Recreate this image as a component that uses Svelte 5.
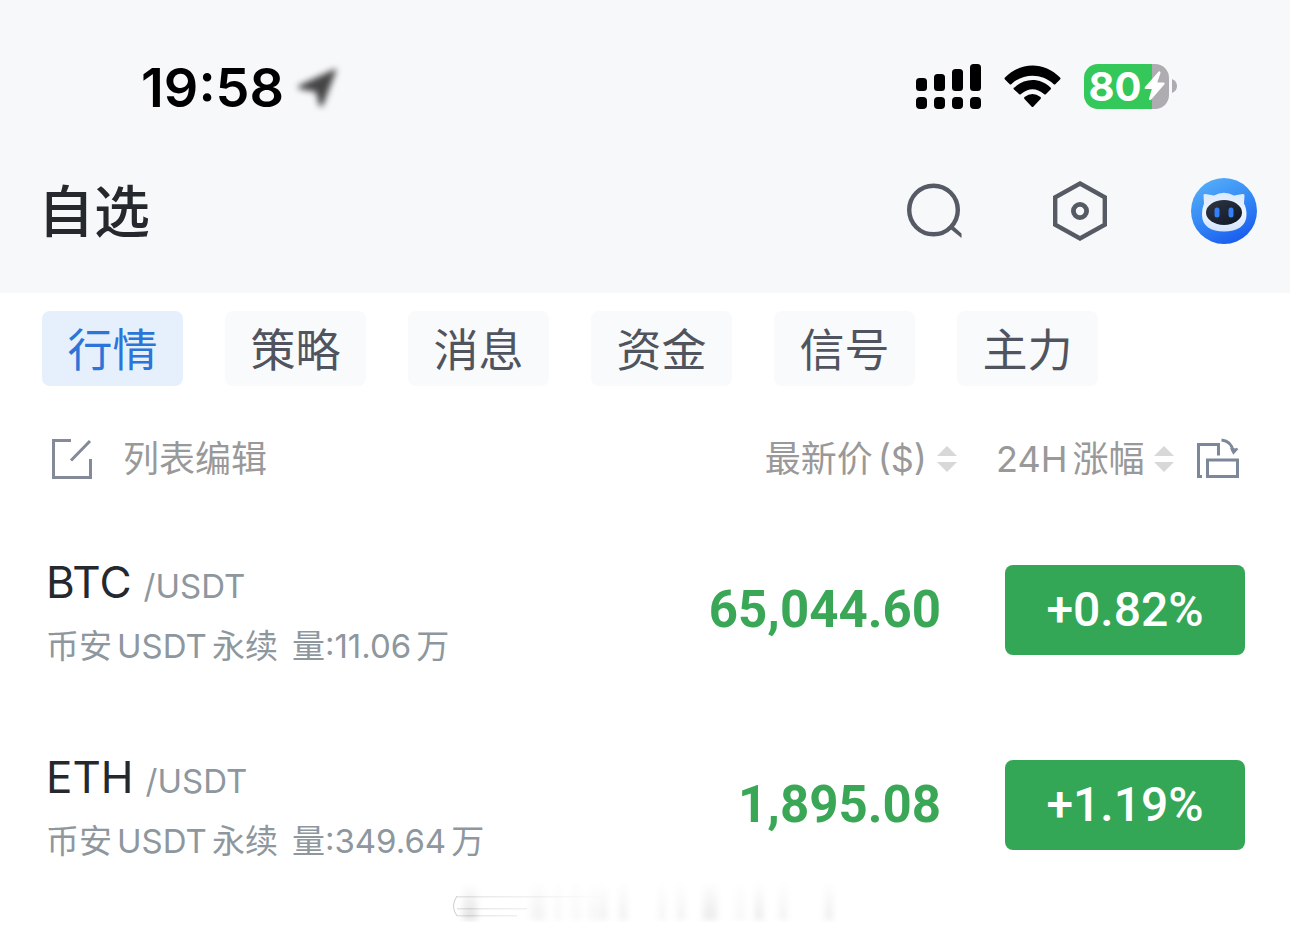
<script lang="ts">
  type Part = { text: string; latin?: boolean };
  type Pair = {
    base: string;
    quote: string;
    volume: string;
    price: string;
    change: string;
  };

  const TABS = ['行情', '策略', '消息', '资金', '信号', '主力'];

  const PAIRS: Pair[] = [
    { base: 'BTC', quote: 'USDT', volume: '11.06', price: '65,044.60', change: '+0.82%' },
    { base: 'ETH', quote: 'USDT', volume: '349.64', price: '1,895.08', change: '+1.19%' },
  ];

  // faint scroll residue under the list: [x, width, opacity]
  const STREAKS = [
    [80, 14, 0.05], [104, 6, 0.04], [120, 10, 0.03], [138, 8, 0.04],
    [148, 8, 0.06], [168, 8, 0.06], [208, 6, 0.05], [226, 8, 0.05],
    [252, 14, 0.08], [284, 10, 0.03], [304, 8, 0.08], [328, 8, 0.05], [374, 8, 0.07],
  ];

  let active = $state('行情');

  function marketParts(p: Pair): Part[] {
    return [
      { text: '币安' },
      { text: p.quote, latin: true },
      { text: '永续' },
    ];
  }
</script>

{#snippet sorter()}
  <svg class="sorter" viewBox="0 0 20 28" aria-hidden="true">
    <path d="M10 1 20 11H0z" />
    <path d="M10 27 0 17h20z" />
  </svg>
{/snippet}

<div class="app">
  <header class="top">
    <div class="status">
      <div class="clock">
        <time>19:58</time>
        <svg class="location" viewBox="0 0 50 50" aria-hidden="true">
          <path d="M43 6q2-1 1 2L31 42q-2 3-4 0l-3-13-16-3q-4-2 0-4z" />
        </svg>
      </div>
      <div class="indicators">
        <svg class="signal" viewBox="0 0 65 45" aria-hidden="true">
          <rect x="0" y="14" width="11" height="13" rx="3.5" />
          <rect x="18" y="10" width="11" height="17" rx="3.5" />
          <rect x="36" y="5" width="11" height="22" rx="3.5" />
          <rect x="54" y="0" width="11" height="27" rx="3.5" />
          <rect x="0" y="33" width="11" height="12" rx="4" />
          <rect x="18" y="33" width="11" height="12" rx="4" />
          <rect x="36" y="33" width="11" height="12" rx="4" />
          <rect x="54" y="33" width="11" height="12" rx="4" />
        </svg>
        <svg class="wifi" viewBox="0 0 57 43" aria-hidden="true">
          <path d="M1 12.5C16.5-3.500 40.5-3.500 56 12.5q1 1 0 2L51.500 19q-1 1-2 0C38 8 19 8 7.500 19q-1 1-2 0L1 14.500q-1-1 0-2z" />
          <path d="M10.500 22.500c10-10 26-10 36 0q1 1 0 2L42 29q-1 1-2 0-11.500-9.500-23 0-1 1-2 0l-5-4.500q-1-1 0-2z" />
          <path d="M20.500 32q8-6 16 0 1 1 0 2l-7 7.500q-1 1-2 0l-7-7.500q-1-1 0-2z" />
        </svg>
        <div class="battery">
          <div class="cell">
            <span>80</span>
            <svg class="bolt" viewBox="0 0 21 30" aria-hidden="true">
              <path d="M14.500.800 1 16q-1.200 2 .8 2h6L5 27.500q0 2.500 2 1.200L20.300 13.500q1-2-.8-2h-6.300L16.500 2Q16.500-.5 14.500.800z" />
            </svg>
          </div>
          <svg class="nub" viewBox="0 0 5 14" aria-hidden="true"><path d="M0 0q5 2 5 7T0 14z" /></svg>
        </div>
      </div>
    </div>

    <div class="nav">
      <h1>自选</h1>
      <div class="actions">
        <button type="button" aria-label="搜索">
          <svg viewBox="0 0 66 66" aria-hidden="true">
            <circle cx="30.500" cy="32" r="24.300" fill="none" stroke="#555a65" stroke-width="4.4" />
            <path fill="#555a65" d="m48.500 46.500 10 9v4.500L45 49z" />
          </svg>
        </button>
        <button type="button" aria-label="设置">
          <svg viewBox="0 0 66 66" aria-hidden="true">
            <g fill="none" stroke="#555a65" stroke-width="4.4">
              <path d="m33 5.500 24.800 13.800v27.400L33 60.500 8.200 46.700V19.300z" />
              <circle cx="33" cy="33" r="6.600" stroke-width="4.8" />
            </g>
          </svg>
        </button>
        <button type="button" aria-label="助手">
          <svg viewBox="0 0 66 66" aria-hidden="true">
            <defs>
              <linearGradient id="sky" x1=".25" y1="0" x2=".75" y2="1">
                <stop offset="0" stop-color="#54adf8" />
                <stop offset=".5" stop-color="#3488f5" />
                <stop offset="1" stop-color="#1858ee" />
              </linearGradient>
              <linearGradient id="face" x1="0" y1="0" x2="1" y2="1">
                <stop offset="0" stop-color="#303847" />
                <stop offset="1" stop-color="#0d1422" />
              </linearGradient>
              <linearGradient id="shell" x1="0" y1="0" x2="0" y2="1">
                <stop offset="0" stop-color="#d9e9fd" />
                <stop offset=".5" stop-color="#eef5ff" />
                <stop offset="1" stop-color="#d3e3fc" />
              </linearGradient>
            </defs>
            <circle cx="33" cy="33" r="33" fill="url(#sky)" />
            <path fill="url(#shell)" d="M12.500 17.500q0-2 2-1.500l8.500 1.500q10-5.500 20 0l8.500-1.500q2-.5 2 1.500l-.5 8Q55.500 30 55.500 37C55.500 48 46 53.500 33 53.500S11 48 11 37q0-7 2-11.500z" />
            <ellipse cx="33" cy="34.500" rx="18" ry="12.500" fill="url(#face)" />
            <rect x="23.500" y="29.500" width="5" height="10" rx="2.5" fill="#347ff5" />
            <rect x="37.500" y="29.500" width="5" height="10" rx="2.5" fill="#347ff5" />
          </svg>
        </button>
      </div>
    </div>
  </header>

  <main>
    <nav class="tabs">
      {#each TABS as tab (tab)}
        <button type="button" class:active={tab === active} onclick={() => (active = tab)}>{tab}</button>
      {/each}
    </nav>

    <table>
      <thead>
        <tr>
          <th class="name">
            <button type="button" class="edit">
              <svg viewBox="0 0 42 42" aria-hidden="true">
                <path d="M20 2.500H2.500v37h37V21M20 22.500 39 3" />
              </svg>
              列表编辑
            </button>
          </th>
          <th class="price">
            <button type="button">
              <span>最新价<span class="latin">($)</span></span>
              {@render sorter()}
            </button>
          </th>
          <th class="change">
            <div class="change-head">
              <button type="button">
                <span>24H<span class="cjk">涨幅</span></span>
                {@render sorter()}
              </button>
              <button type="button" aria-label="切换">
                <svg class="swap" viewBox="0 0 44 44" aria-hidden="true">
                  <path d="M6 39.500H2.500V7.500h20v11" />
                  <path d="M11.500 23h30v16.500h-30z" />
                  <path d="M25.500 3q10 1 12 12" />
                  <path class="tip" d="m35 11 2.500 5 4-4.500" />
                </svg>
              </button>
            </div>
          </th>
        </tr>
      </thead>
      <tbody>
        {#each PAIRS as p (p.base)}
          <tr>
            <td class="name">
              <div class="symbol">{p.base}<small>/{p.quote}</small></div>
              <div class="detail">
                {#each marketParts(p) as part}<span class:latin={part.latin}>{part.text}</span>{/each}
                <span class="volume">量:{p.volume}<span class="cjk">万</span></span>
              </div>
            </td>
            <td class="price">{p.price}</td>
            <td class="change"><span class="badge">{p.change}</span></td>
          </tr>
        {/each}
      </tbody>
    </table>

    <svg class="residue" viewBox="0 0 384 40" aria-hidden="true">
      <defs>
        <linearGradient id="fade" x1="0" y1="0" x2="0" y2="1">
          <stop offset="0" stop-color="#000" stop-opacity="0" />
          <stop offset="1" stop-color="#000" />
        </linearGradient>
        <linearGradient id="trail">
          <stop offset="0" stop-color="#000" stop-opacity=".1" />
          <stop offset="1" stop-color="#000" stop-opacity="0" />
        </linearGradient>
      </defs>
      <g class="soft">
        <rect x="10" y="2" width="14" height="36" fill="url(#fade)" opacity=".12" />
        {#each STREAKS as [x, width, opacity]}
          <rect x={x - 2} y="0" {width} height="38" fill="url(#fade)" {opacity} />
        {/each}
      </g>
      <path d="M4 14h150v1.500H4zM4 26h70v1.500H4zM4 33h60v1.500H4z" fill="url(#trail)" />
      <path d="M4 14q-7 10 0 20" fill="none" stroke="#ccc" />
    </svg>
  </main>
</div>

<style>
  :global(body) {
    margin: 0;
    background: #fff;
  }
  .app {
    font-family: Inter, 'Noto Sans CJK SC', sans-serif;
    color: #25282d;
  }
  button {
    padding: 0;
    border: 0;
    background: none;
    color: inherit;
    font: inherit;
    cursor: pointer;
  }
  svg {
    display: block;
    flex-shrink: 0;
  }
  .top {
    background: #f7f8fa;
    padding-bottom: 49px;
  }

  .status {
    display: flex;
    align-items: center;
    justify-content: space-between;
    height: 66px;
    padding: 53px 113px 59px 141px;
  }
  .clock {
    display: flex;
    align-items: center;
    gap: 8px;
    padding-top: 3px;
    color: #000;
    font-size: 54px;
    font-weight: 600;
    line-height: 66px;
  }
  .location {
    width: 50px;
    height: 50px;
    fill: #444;
    filter: blur(3px);
  }
  .indicators {
    display: flex;
    align-items: center;
    gap: 23px;
  }
  .signal {
    width: 65px;
    height: 45px;
  }
  .wifi {
    width: 57px;
    height: 43px;
  }
  .battery {
    display: flex;
    align-items: center;
    gap: 3px;
  }
  .cell {
    display: flex;
    align-items: center;
    justify-content: center;
    gap: 2px;
    width: 85px;
    height: 45px;
    border-radius: 14px;
    background: linear-gradient(to right, #34c759 80%, #aeacb1 80%);
    color: #fff;
    font-size: 40px;
    font-weight: 700;
  }
  .bolt {
    width: 21px;
    height: 30px;
    fill: #fff;
  }
  .nub {
    width: 5px;
    height: 14px;
    fill: #aeacb1;
  }

  .nav {
    display: flex;
    align-items: center;
    justify-content: space-between;
    height: 66px;
    padding: 0 33px 0 38px;
  }
  h1 {
    margin: 0;
    padding-top: 2px;
    font-size: 56px;
    font-weight: 500;
    line-height: 66px;
  }
  .actions {
    display: flex;
    gap: 78px;
  }
  .actions svg {
    width: 66px;
    height: 66px;
  }

  .tabs {
    display: flex;
    gap: 42px;
    padding: 18px 42px 20px;
  }
  .tabs button {
    width: 141px;
    height: 75px;
    padding-top: 5px;
    border-radius: 8px;
    background: #f9fafc;
    color: #50545e;
    font-size: 45px;
    line-height: 70px;
  }
  .tabs .active {
    background: #e6f0fc;
    color: #2b74d8;
  }

  table {
    width: 100%;
    border-collapse: collapse;
  }
  th,
  td {
    padding: 0;
    font-weight: 400;
    text-align: left;
  }
  thead tr {
    height: 106px;
    color: #999;
    font-size: 36px;
    line-height: 50px;
  }
  tbody tr {
    height: 195px;
  }
  thead button {
    display: flex;
    align-items: center;
    gap: 10px;
  }
  .latin,
  .cjk {
    margin-left: 5px;
  }
  .name {
    padding-left: 46px;
  }
  thead .edit {
    gap: 30px;
    padding-left: 5px;
  }
  .edit svg {
    width: 42px;
    height: 42px;
    fill: none;
    stroke: #858a98;
    stroke-width: 3;
  }
  .price {
    text-align: right;
  }
  th.price {
    padding-right: 39px;
  }
  th.price button {
    margin-left: auto;
  }
  .sorter {
    width: 20px;
    height: 28px;
    fill: #d8d8d8;
  }
  .change {
    width: 249px;
    padding-right: 45px;
    text-align: right;
  }
  .change-head {
    display: flex;
    align-items: center;
    justify-content: space-between;
    padding-right: 5px;
  }
  .swap {
    width: 44px;
    height: 44px;
    fill: none;
    stroke: #7c8899;
    stroke-width: 3;
  }
  .swap .tip {
    fill: #7c8899;
    stroke-width: 2;
  }

  .symbol {
    padding-top: 2px;
    font-size: 44px;
    line-height: 60px;
  }
  .symbol small {
    margin-left: 12px;
    color: #8e979e;
    font-size: 33px;
  }
  .detail {
    display: flex;
    margin-top: 6px;
    color: #8e979e;
    font-size: 33px;
    line-height: 48px;
    white-space: nowrap;
  }
  .detail .latin {
    margin-right: 5px;
  }
  .volume {
    margin-left: 14px;
  }
  td.price {
    padding-right: 55px;
    color: #3aa757;
    font-family: Roboto, sans-serif;
    font-size: 51px;
    font-weight: 700;
  }
  .badge {
    display: inline-block;
    width: 240px;
    border-radius: 8px;
    background: #34a756;
    color: #fff;
    font-family: Roboto, sans-serif;
    font-size: 48px;
    font-weight: 500;
    line-height: 90px;
    text-align: center;
    vertical-align: middle;
  }

  .residue {
    width: 384px;
    height: 40px;
    margin: -20px auto 0;
  }
  .soft {
    filter: blur(3px);
  }
</style>
